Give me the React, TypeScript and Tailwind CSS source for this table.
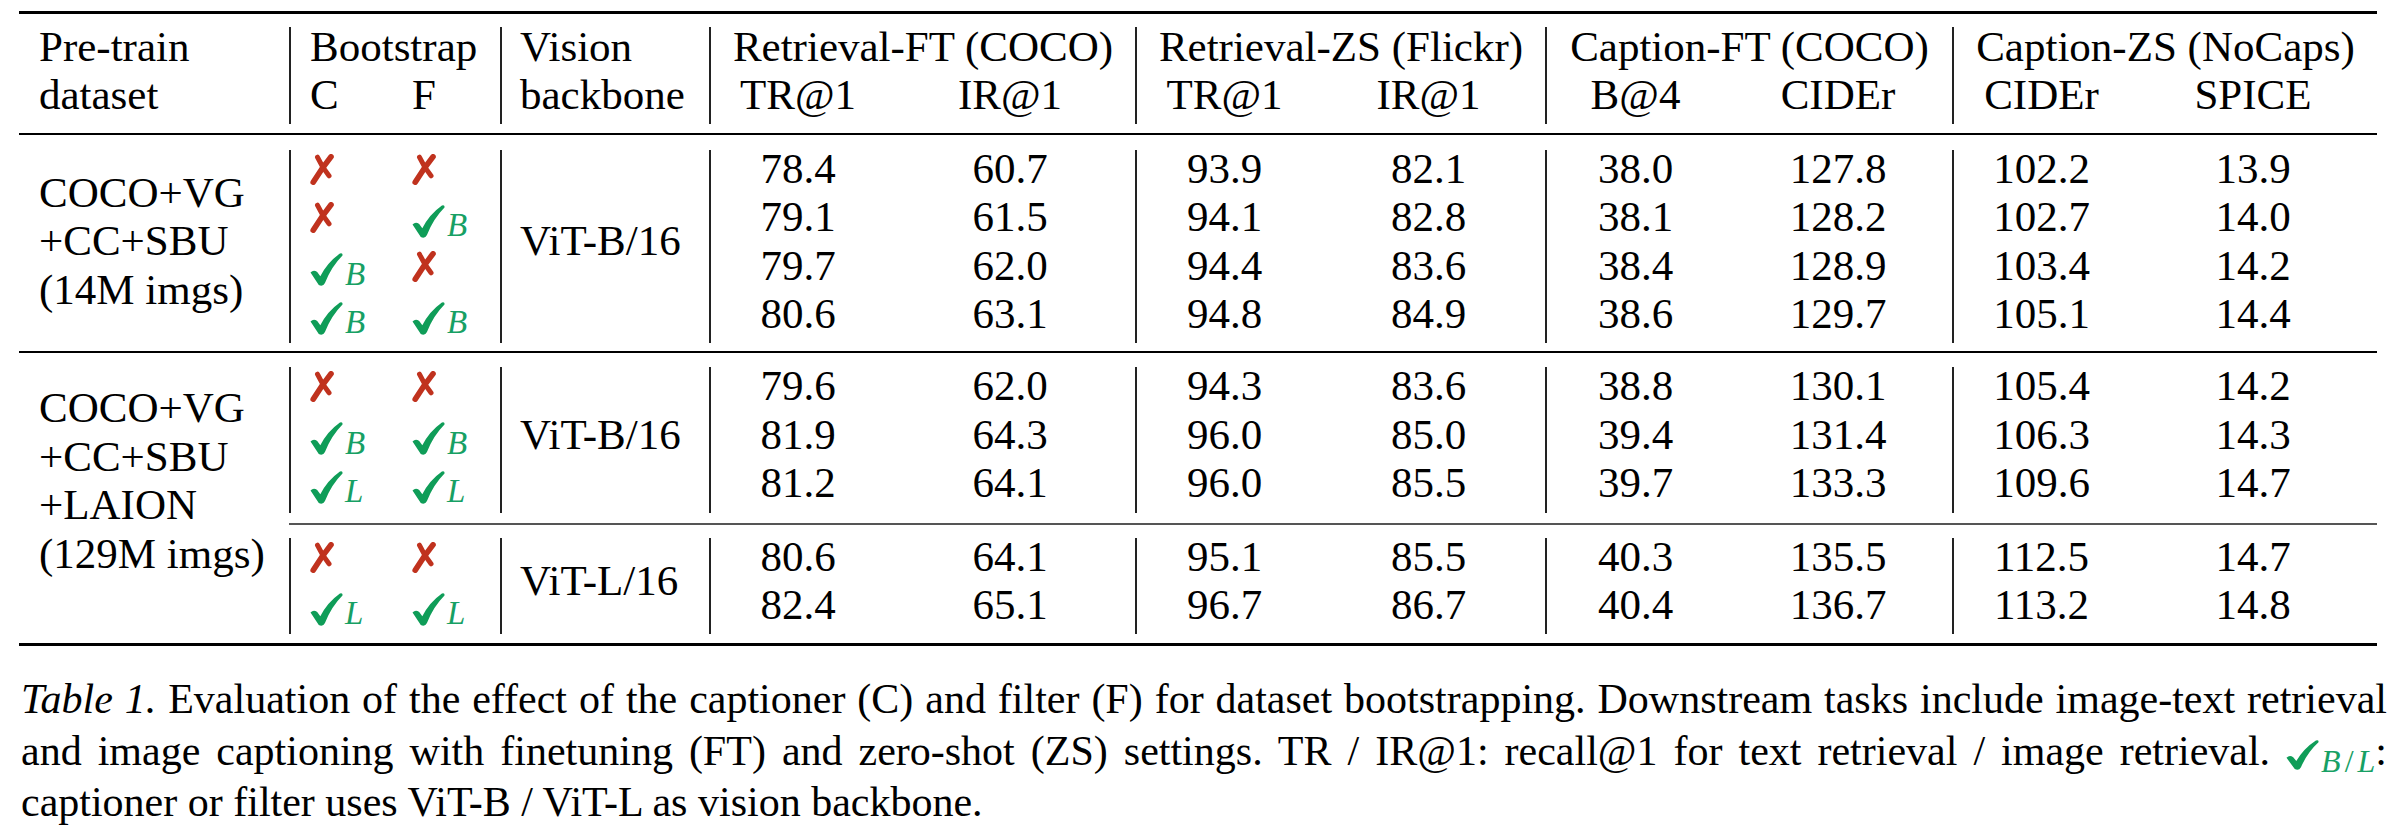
import React from "react";

const GREEN = "#0f9d58";
const SUBGREEN = "#17a064";
const RED = "#c0321e";

type Sub = { label: string; w: string };
type Metric = { title: string; w: string; subs: Sub[] };

const metrics: Metric[] = [
  { title: "Retrieval-FT (COCO)", w: "w-[426px]", subs: [{ label: "TR@1", w: "w-[174px]" }, { label: "IR@1", w: "w-[250px]" }] },
  { title: "Retrieval-ZS (Flickr)", w: "w-[410px]", subs: [{ label: "TR@1", w: "w-[175px]" }, { label: "IR@1", w: "w-[233px]" }] },
  { title: "Caption-FT (COCO)", w: "w-[407px]", subs: [{ label: "B@4", w: "w-[177px]" }, { label: "CIDEr", w: "w-[228px]" }] },
  { title: "Caption-ZS (NoCaps)", w: "w-[425px]", subs: [{ label: "CIDEr", w: "w-[175px]" }, { label: "SPICE", w: "w-[248px]" }] },
];

const Cross = () => (
  <svg width="24" height="31" viewBox="0 0 24 31" className="inline-block align-[-2px]">
    <path d="M21 2.8Q12 14 3.2 28.2" fill="none" stroke={RED} strokeWidth="5.6" strokeLinecap="round" />
    <path d="M7.5 3.2Q12 13 19 21.8" fill="none" stroke={RED} strokeWidth="5" strokeLinecap="round" />
  </svg>
);

const Check = ({ h = 33 }: { h?: number }) => (
  <svg width="33" height={h} viewBox="0 0 32 32" preserveAspectRatio="none" className="inline-block">
    <path
      d="M0.5 19Q3.5 15.5 7 18.5L10 22.5Q17 9 29 0.5Q32 -0.5 31.5 2.5Q21 13 14.5 29Q12.5 33 8.5 31Z"
      fill={GREEN}
    />
  </svg>
);

const Mark = ({ v }: { v: string }) =>
  v === "x" ? (
    <Cross />
  ) : (
    <>
      <Check />
      <span className="ml-[2px] italic text-[33px] leading-[0] align-[-5px]" style={{ color: SUBGREEN }}>
        {v}
      </span>
    </>
  );

type BlockProps = { marks: string[][]; backbone: string; rows: string[][] };

const Block = ({ marks, backbone, rows }: BlockProps) => (
  <div className="flex">
    <div className="w-[211px] border-l-2 border-[#222] flex">
      <div className="w-[121px] pl-[19px] -mt-[5px] mb-[5px]">
        {marks.map((m, i) => (
          <div key={i} className="leading-[48.4px]">
            <Mark v={m[0]} />
          </div>
        ))}
      </div>
      <div className="-mt-[5px] mb-[5px]">
        {marks.map((m, i) => (
          <div key={i} className="leading-[48.4px]">
            <Mark v={m[1]} />
          </div>
        ))}
      </div>
    </div>
    <div className="w-[209px] border-l-2 border-[#222] pl-[18px] flex items-center">
      <div className="-mt-[5px] mb-[5px]">{backbone}</div>
    </div>
    {metrics.map((g, gi) => (
      <div key={gi} className={`${g.w} border-l-2 border-[#222] flex`}>
        {g.subs.map((s, si) => (
          <div key={si} className={`${s.w} text-center -mt-[5px] mb-[5px]`}>
            {rows.map((r, ri) => (
              <div key={ri}>{r[gi * 2 + si]}</div>
            ))}
          </div>
        ))}
      </div>
    ))}
  </div>
);

const g1 = [
  ["78.4", "60.7", "93.9", "82.1", "38.0", "127.8", "102.2", "13.9"],
  ["79.1", "61.5", "94.1", "82.8", "38.1", "128.2", "102.7", "14.0"],
  ["79.7", "62.0", "94.4", "83.6", "38.4", "128.9", "103.4", "14.2"],
  ["80.6", "63.1", "94.8", "84.9", "38.6", "129.7", "105.1", "14.4"],
];
const g2a = [
  ["79.6", "62.0", "94.3", "83.6", "38.8", "130.1", "105.4", "14.2"],
  ["81.9", "64.3", "96.0", "85.0", "39.4", "131.4", "106.3", "14.3"],
  ["81.2", "64.1", "96.0", "85.5", "39.7", "133.3", "109.6", "14.7"],
];
const g2b = [
  ["80.6", "64.1", "95.1", "85.5", "40.3", "135.5", "112.5", "14.7"],
  ["82.4", "65.1", "96.7", "86.7", "40.4", "136.7", "113.2", "14.8"],
];

export default function App() {
  return (
    <div className="w-[2397px] h-[838px] bg-white text-black overflow-hidden pt-[11px] font-['Liberation_Serif',serif]">
      {/* table */}
      <div className="ml-[19px] w-[2358px] border-t-[3px] border-b-[3px] border-black text-[43px] leading-[48.4px]">
        {/* header */}
        <div className="flex pt-[13px] pb-[9px]">
          <div className="w-[270px] pl-[20px]">
            <div className="-mt-[4px] mb-[4px]">
              Pre-train
              <br />
              dataset
            </div>
          </div>
          <div className="w-[211px] border-l-2 border-[#222] pl-[19px]">
            <div className="-mt-[4px] mb-[4px]">
              Bootstrap
              <div className="flex">
                <span className="w-[102px]">C</span>
                <span>F</span>
              </div>
            </div>
          </div>
          <div className="w-[209px] border-l-2 border-[#222] pl-[18px]">
            <div className="-mt-[4px] mb-[4px]">
              Vision
              <br />
              backbone
            </div>
          </div>
          {metrics.map((g, gi) => (
            <div key={gi} className={`${g.w} border-l-2 border-[#222]`}>
              <div className="-mt-[4px] mb-[4px]">
                <div className="text-center whitespace-nowrap">{g.title}</div>
                <div className="flex">
                  {g.subs.map((s, si) => (
                    <div key={si} className={`${s.w} text-center`}>
                      {s.label}
                    </div>
                  ))}
                </div>
              </div>
            </div>
          ))}
        </div>

        {/* group 1 */}
        <div className="flex border-t-2 border-black pt-[15px] pb-[8px]">
          <div className="w-[270px] pl-[20px] flex items-center">
            <div className="-mt-[5px] mb-[5px]">
              COCO+VG
              <br />
              +CC+SBU
              <br />
              (14M imgs)
            </div>
          </div>
          <Block
            marks={[
              ["x", "x"],
              ["x", "B"],
              ["B", "x"],
              ["B", "B"],
            ]}
            backbone="ViT-B/16"
            rows={g1}
          />
        </div>

        {/* group 2 */}
        <div className="flex border-t-2 border-black pt-[14px] pb-[9px]">
          <div className="w-[270px] pl-[20px] pt-[17px]">
            COCO+VG
            <br />
            +CC+SBU
            <br />
            +LAION
            <br />
            (129M imgs)
          </div>
          <div className="flex flex-col">
            <Block
              marks={[
                ["x", "x"],
                ["B", "B"],
                ["L", "L"],
              ]}
              backbone="ViT-B/16"
              rows={g2a}
            />
            <div className="mt-[10px] mb-[13px] border-t-2 border-[#555]" />
            <Block
              marks={[
                ["x", "x"],
                ["L", "L"],
              ]}
              backbone="ViT-L/16"
              rows={g2b}
            />
          </div>
        </div>
      </div>

      {/* caption */}
      <div className="ml-[21px] w-[2366px] mt-[28px] text-[42px] leading-[51.5px]">
        <div className="whitespace-nowrap text-justify [text-align-last:justify]">
          <i>Table 1.</i> Evaluation of the effect of the captioner (C) and filter (F) for dataset bootstrapping.
          Downstream tasks include image-text retrieval
        </div>
        <div className="whitespace-nowrap text-justify [text-align-last:justify]">
          and image captioning with finetuning (FT) and zero-shot (ZS) settings. TR / IR@1: recall@1 for text
          retrieval / image retrieval.{" "}
          <span className="whitespace-nowrap">
            <Check h={30} />
            <span className="ml-[2px] italic text-[32px] leading-[0] align-[-7px]" style={{ color: SUBGREEN }}>
              B<span className="not-italic mx-[4px]">/</span>L
            </span>
            :
          </span>
        </div>
        <div className="whitespace-nowrap">captioner or filter uses ViT-B / ViT-L as vision backbone.</div>
      </div>
    </div>
  );
}
